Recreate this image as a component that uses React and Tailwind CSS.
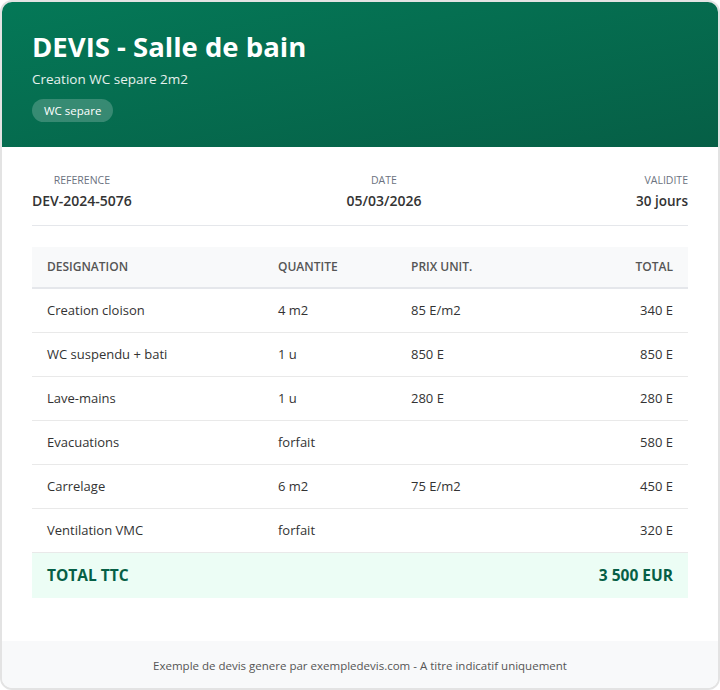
import React from "react";

const rows = [
  ["Creation cloison", "4 m2", "85 E/m2", "340 E"],
  ["WC suspendu + bati", "1 u", "850 E", "850 E"],
  ["Lave-mains", "1 u", "280 E", "280 E"],
  ["Evacuations", "forfait", "", "580 E"],
  ["Carrelage", "6 m2", "75 E/m2", "450 E"],
  ["Ventilation VMC", "forfait", "", "320 E"],
];

export default function App() {
  return (
    <div className="w-[720px] h-[690px] bg-white" style={{ fontFamily: '"Open Sans", "Noto Sans", sans-serif' }}>
      <div className="h-full border-2 border-[#e3e3e3] rounded-[12px] overflow-hidden flex flex-col">
        <div className="bg-gradient-to-br from-[#047857] to-[#065f46] px-[30px] pt-[29px] h-[145px] shrink-0 text-white">
          <h1 className="text-[27.5px] font-bold leading-[32px]">DEVIS - Salle de bain</h1>
          <p className="text-[13.5px] mt-[7px] leading-[18px] text-white/90">Creation WC separe 2m2</p>
          <span className="inline-block mt-[11px] rounded-full bg-white/20 px-[12px] py-[3px] text-[11.5px] leading-[17px]">WC separe</span>
        </div>
        <div className="flex-1 px-[30px] pt-[26px]">
          <div className="flex justify-between border-b border-[#e5e7eb] pb-[15px]">
            <div className="text-center">
              <div className="text-[10.5px] uppercase text-[#6b7280] leading-[14px]">Reference</div>
              <div className="text-[14px] font-semibold text-[#333333] mt-[5px] leading-[18px]">DEV-2024-5076</div>
            </div>
            <div className="text-center">
              <div className="text-[10.5px] uppercase text-[#6b7280] leading-[14px]">Date</div>
              <div className="text-[14px] font-semibold text-[#333333] mt-[5px] leading-[18px]">05/03/2026</div>
            </div>
            <div className="text-right">
              <div className="text-[10.5px] uppercase text-[#6b7280] leading-[14px]">Validite</div>
              <div className="text-[13.5px] font-semibold text-[#333333] mt-[5px] leading-[18px]">30 jours</div>
            </div>
          </div>
          <table className="w-full mt-[21px] border-collapse text-[13px] text-[#333333]">
            <thead>
              <tr className="bg-[#f8f9fa] border-b-2 border-[#e5e7eb]">
                <th className="w-[231px] h-[41px] px-[15px] text-left text-[12px] font-semibold text-[#555555] uppercase">Designation</th>
                <th className="w-[133px] px-[15px] text-left text-[12px] font-semibold text-[#555555] uppercase">Quantite</th>
                <th className="px-[15px] text-left text-[12px] font-semibold text-[#555555] uppercase">Prix unit.</th>
                <th className="px-[15px] text-right text-[12px] font-semibold text-[#555555] uppercase">Total</th>
              </tr>
            </thead>
            <tbody>
              {rows.map((r, i) => (
                <tr key={i} className="border-b border-[#e9e9e9]">
                  <td className="py-[13px] leading-[17px] px-[15px]">{r[0]}</td>
                  <td className="px-[15px]">{r[1]}</td>
                  <td className="px-[15px]">{r[2]}</td>
                  <td className="px-[15px] text-right">{r[3]}</td>
                </tr>
              ))}
              <tr className="bg-[#ecfdf5]">
                <td className="h-[45px] px-[15px] text-[15.5px] font-bold text-[#065f46]">TOTAL TTC</td>
                <td></td>
                <td></td>
                <td className="px-[15px] text-right text-[15.5px] font-bold text-[#065f46]">3 500 EUR</td>
              </tr>
            </tbody>
          </table>
        </div>
        <div className="bg-[#f8f9fa] h-[47px] shrink-0 flex items-center justify-center pt-[2px] text-[11.5px] text-[#555555]">
          Exemple de devis genere par exempledevis.com - A titre indicatif uniquement
        </div>
      </div>
    </div>
  );
}
